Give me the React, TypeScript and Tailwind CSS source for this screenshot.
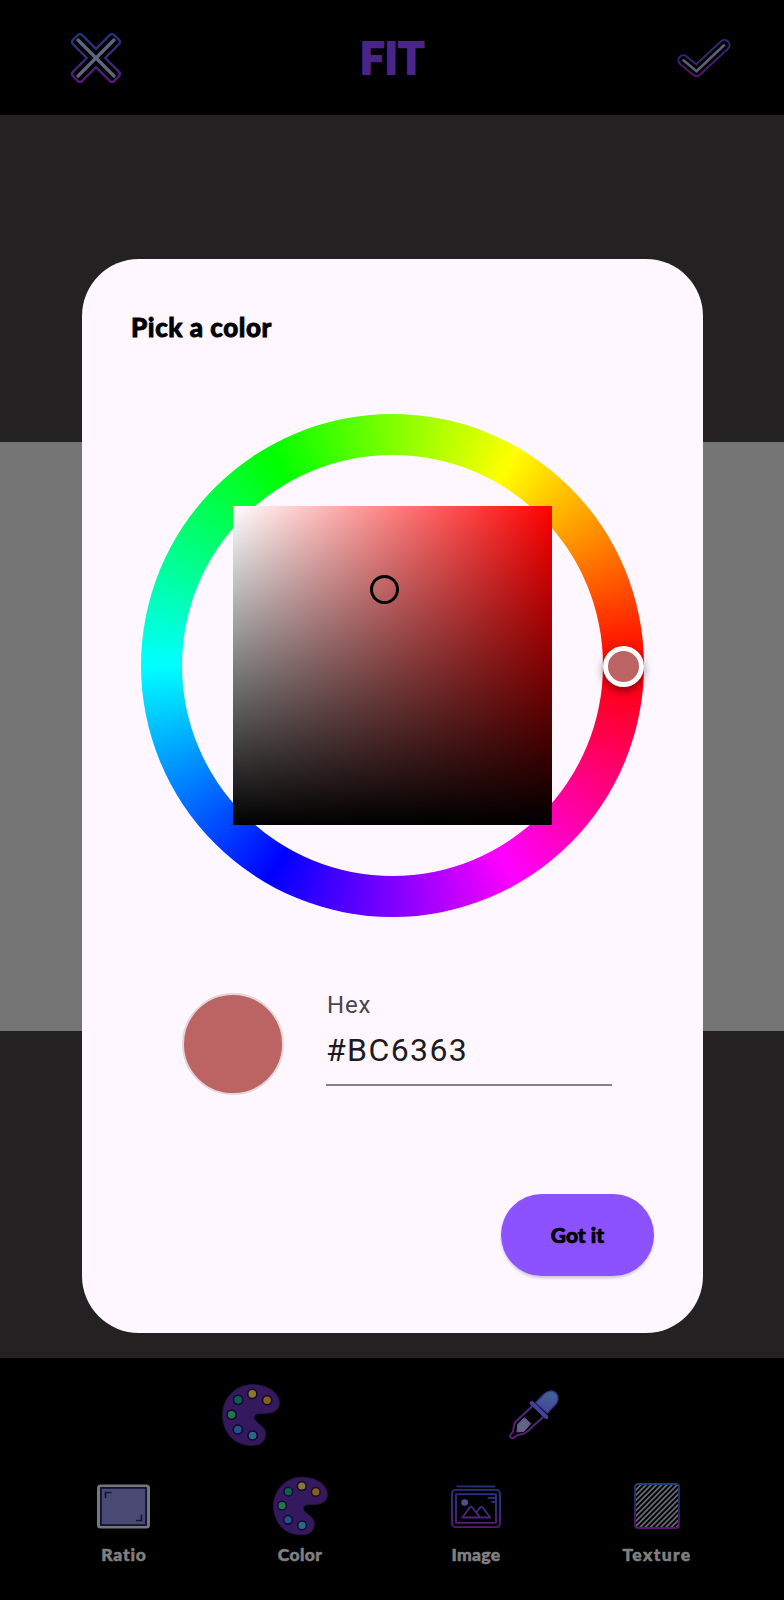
import React from "react";

const display = "font-['Lato','Open_Sans',sans-serif] font-black";

function CloseIcon() {
  return (
    <svg className="h-[54px] w-[54px]" viewBox="0 0 54 54" fill="none" strokeLinecap="round">
      <defs>
        <linearGradient id="closeEdge" x1="0" y1="2" x2="0" y2="52" gradientUnits="userSpaceOnUse">
          <stop offset="0" stopColor="#20327a" />
          <stop offset="0.5" stopColor="#352f78" />
          <stop offset="1" stopColor="#5a1672" />
        </linearGradient>
      </defs>
      <path
        d="M27 17.800 40.700 4.100Q43 1.800 45.300 4.100L49.900 8.700Q52.200 11 49.900 13.300L36.200 27 49.900 40.700Q52.200 43 49.900 45.300L45.300 49.900Q43 52.200 40.700 49.900L27 36.200 13.300 49.900Q11 52.200 8.700 49.900L4.100 45.300Q1.800 43 4.100 40.700L17.800 27 4.100 13.300Q1.800 11 4.100 8.700L8.700 4.100Q11 1.800 13.300 4.100Z"
        stroke="url(#closeEdge)"
        strokeWidth="2.400"
        strokeLinejoin="round"
      />
      <path d="M9 9 45 45M45 9 9 45" stroke="#5f6780" strokeWidth="3.200" />
    </svg>
  );
}

function CheckIcon() {
  return (
    <svg className="h-[40px] w-[54px]" viewBox="677 38 54 40" fill="none" strokeLinecap="round" strokeLinejoin="round">
      <defs>
        <linearGradient id="checkEdge" x1="0" y1="39" x2="0" y2="77" gradientUnits="userSpaceOnUse">
          <stop offset="0" stopColor="#1f3272" />
          <stop offset="1" stopColor="#54146a" />
        </linearGradient>
      </defs>
      <path d="M683.500 60.300 696.500 71 724.500 45" stroke="url(#checkEdge)" strokeWidth="12" />
      <path d="M683.500 60.300 696.500 71 724.500 45" stroke="#000" strokeWidth="8" />
      <path d="M683.500 60.300 696.500 71.300 724 45.300" stroke="#596078" strokeWidth="2.600" />
    </svg>
  );
}

function PaletteIcon({ className }: { className: string }) {
  const dots: [number, number, string][] = [
    [158, 71, "#857b2b"],
    [203, 90, "#87601a"],
    [115, 89, "#07634c"],
    [95, 134, "#21754f"],
    [114, 179, "#21538b"],
    [159, 197, "#28698c"],
  ];
  return (
    <svg className={className} viewBox="66 41 176 188">
      <path
        d="M158 43C205 43 240 68 240 98C240 122 220 129 200 130C183 131 168 130 164 138C160 148 172 157 184 167C198 178 201 190 196 205C190 222 175 227 155 227C105 227 68 190 68 135C68 83 108 43 158 43Z"
        fill="#34195f"
        stroke="#281741"
        strokeWidth="3"
      />
      {dots.map(([x, y, color]) => (
        <circle key={`${x}-${y}`} cx={x} cy={y} r="14" fill={color} stroke="#160b2e" strokeWidth="5" />
      ))}
    </svg>
  );
}

function DropperIcon() {
  return (
    <svg className="h-[52px] w-[52px]" viewBox="55 52 156 156" fill="none" strokeLinejoin="round" strokeLinecap="round">
      <defs>
        <linearGradient id="dropEdge" x1="170" y1="80" x2="70" y2="200" gradientUnits="userSpaceOnUse">
          <stop offset="0" stopColor="#343688" />
          <stop offset="1" stopColor="#5d1c78" />
        </linearGradient>
        <linearGradient id="dropBulb" x1="180" y1="55" x2="160" y2="125" gradientUnits="userSpaceOnUse">
          <stop offset="0" stopColor="#416591" />
          <stop offset="1" stopColor="#48449a" />
        </linearGradient>
      </defs>
      <path d="M138 93 161 69C174 56 190 55 199 64C209 75 206 90 196 100L173 124Z" fill="url(#dropBulb)" stroke="#353487" strokeWidth="4" />
      <path d="M126 94 170 136" stroke="#45429b" strokeWidth="12" />
      <path d="M126 105 77 151C71 158 73 170 70 180L62 190C59 197 67 202 73 198L83 190C94 187 104 189 112 180L160 136" stroke="url(#dropEdge)" strokeWidth="6" />
      <path d="M105 139 123 156 103 179 82 181 84 159Z" fill="#656289" stroke="#656289" strokeWidth="3" />
    </svg>
  );
}

function RatioIcon() {
  return (
    <svg className="mr-[2px] h-[45px] w-[53px]" viewBox="0 0 53 45" fill="none">
      <rect x="0" y="0.500" width="53" height="44" rx="3.500" fill="#77777b" />
      <rect x="3" y="3" width="47" height="39" rx="1" fill="#12122d" />
      <rect x="4.800" y="4.800" width="43.400" height="35.400" fill="#4a4974" />
      <path d="M8.500 14V8.500H14.500M39 36.500H44.500V30.500" stroke="#151531" strokeWidth="1.600" />
    </svg>
  );
}

function ImageIcon() {
  return (
    <svg className="h-[45px] w-[50px]" viewBox="64 43 150 134" fill="none" strokeLinecap="round" strokeLinejoin="round">
      <defs>
        <linearGradient id="imageEdge" x1="0" y1="45" x2="0" y2="175" gradientUnits="userSpaceOnUse">
          <stop offset="0" stopColor="#203078" />
          <stop offset="0.450" stopColor="#39308a" />
          <stop offset="1" stopColor="#5a1870" />
        </linearGradient>
      </defs>
      <g stroke="url(#imageEdge)" strokeWidth="5.500">
        <path d="M83 49.500 195 50" />
        <rect x="67" y="60" width="144" height="112" rx="11" />
        <rect x="79" y="73" width="120" height="86" rx="2" />
        <path d="M176 84H196M187 96H196M98 143 121 112Q124 109 127 112L140 128 151 113Q155 110 159 113L182 143ZM140 128 149 141" />
      </g>
      <circle cx="105" cy="98" r="10" fill="#514f91" />
    </svg>
  );
}

function TextureIcon() {
  return (
    <svg className="h-[46px] w-[46px]" viewBox="0 0 46 46" fill="none">
      <defs>
        <linearGradient id="textureEdge" x1="0" y1="0" x2="0" y2="46" gradientUnits="userSpaceOnUse">
          <stop offset="0" stopColor="#19427a" />
          <stop offset="0.500" stopColor="#30246c" />
          <stop offset="1" stopColor="#5e126f" />
        </linearGradient>
        <clipPath id="textureClip">
          <rect x="1.500" y="1.500" width="43" height="43" rx="2" />
        </clipPath>
      </defs>
      <g clipPath="url(#textureClip)" stroke="#696977" strokeWidth="1.750">
        {Array.from({ length: 17 }, (_, i) => (
          <path key={i} d={`M-2 ${5.5 + i * 5.2} L${5.5 + i * 5.2} -2`} />
        ))}
      </g>
      <rect x="1" y="1" width="44" height="44" rx="3" stroke="url(#textureEdge)" strokeWidth="1.800" />
    </svg>
  );
}

function Tool({ label, width, spacing, children }: { label: string; width: string; spacing: string; children: React.ReactNode }) {
  return (
    <div className={`flex flex-col items-center ${width}`}>
      <div className="flex h-[60px] items-center justify-center">{children}</div>
      <span className={`mt-[9px] text-[17.5px] leading-5 text-[#808080] [-webkit-text-stroke:0.5px_#808080] ${spacing} ${display}`}>{label}</span>
    </div>
  );
}

function ColorWheel() {
  return (
    <div className="relative flex size-[503px] items-center justify-center rounded-full bg-[conic-gradient(from_90deg,#ff0000,#ff00ff,#0000ff,#00ffff,#00ff00,#ffff00,#ff0000)]">
      <div className="size-[421px] rounded-full bg-[#fef7ff]" />
      <div className="absolute left-[92px] top-[92px] size-[319px] bg-[linear-gradient(to_bottom,transparent,#000),linear-gradient(to_right,#fff,#f00)]">
        <div className="absolute left-[137px] top-[69px] size-[29px] rounded-full border-3 border-black" />
      </div>
      <div className="absolute left-[461.5px] top-[231.5px] size-[41px] rounded-full border-5 border-white bg-[#bc6363] shadow-[0_4px_8px_rgba(0,0,0,0.45)]" />
    </div>
  );
}

export default function App() {
  return (
    <div className="relative flex h-[1600px] w-[784px] flex-col overflow-hidden bg-black">
      <header className="flex h-[115px] shrink-0 items-center pl-[69px] pr-[53px]">
        <CloseIcon />
        <h1 className={`ml-[237px] text-[43px] leading-[48px] tracking-[0.5px] text-[#4a2588] [-webkit-text-stroke:2px_#4a2588] ${display}`}>FIT</h1>
        <div className="ml-auto">
          <CheckIcon />
        </div>
      </header>

      <main className="flex h-[1243px] shrink-0 flex-col justify-center bg-[#242123]">
        <div className="h-[589px] bg-[#757575]" />
      </main>

      <footer className="flex flex-1 flex-col">
        <div className="flex h-[114px] items-center pl-[110px]">
          <div className="flex w-[282px] justify-center">
            <PaletteIcon className="h-[62px] w-[58px]" />
          </div>
          <div className="flex w-[283px] justify-center">
            <DropperIcon />
          </div>
        </div>
        <div className="flex pl-[36px] pt-[4px]">
          <Tool label="Ratio" width="w-[176px]" spacing="tracking-[0.8px]">
            <RatioIcon />
          </Tool>
          <Tool label="Color" width="w-[176px]" spacing="tracking-[0.4px]">
            <PaletteIcon className="h-[60px] w-[55px]" />
          </Tool>
          <Tool label="Image" width="w-[176px]" spacing="tracking-[0.3px]">
            <ImageIcon />
          </Tool>
          <Tool label="Texture" width="w-[186px]" spacing="tracking-[1.4px]">
            <TextureIcon />
          </Tool>
        </div>
      </footer>

      <div className="absolute inset-0 flex items-start pl-[82px] pt-[259px]">
        <section role="dialog" className="flex h-[1074px] w-[621px] flex-col rounded-[57px] bg-[#fef7ff] px-[49px] pt-[50px]">
          <h2 className={`h-[105px] text-[26px] leading-[37px] tracking-[0.55px] text-black [-webkit-text-stroke:0.8px_#000] ${display}`}>Pick a color</h2>
          <div className="flex justify-center">
            <ColorWheel />
          </div>
          <div className="mt-[76px] flex items-start pl-[51px]">
            <div className="size-[102px] rounded-full border-2 border-[#e3d5da] bg-[#bc6363]" />
            <label className="ml-[42px] flex h-[93px] w-[286px] flex-col border-b-2 border-[#87818a] font-['Roboto',sans-serif]">
              <span className="pl-px text-[24px] leading-[25px] tracking-[0.8px] text-[#49454f]">Hex</span>
              <span className="mt-[12px] text-[32px] leading-[40px] tracking-[1.4px] text-[#1d1b20]">#BC6363</span>
            </label>
          </div>
          <button className={`ml-auto mt-[99px] h-[82px] w-[153px] rounded-full bg-[#8c52ff] text-[21px] text-black shadow-[0_2px_3px_rgba(0,0,0,0.2)] [-webkit-text-stroke:0.7px_#000] ${display}`}>
            Got it
          </button>
        </section>
      </div>
    </div>
  );
}
